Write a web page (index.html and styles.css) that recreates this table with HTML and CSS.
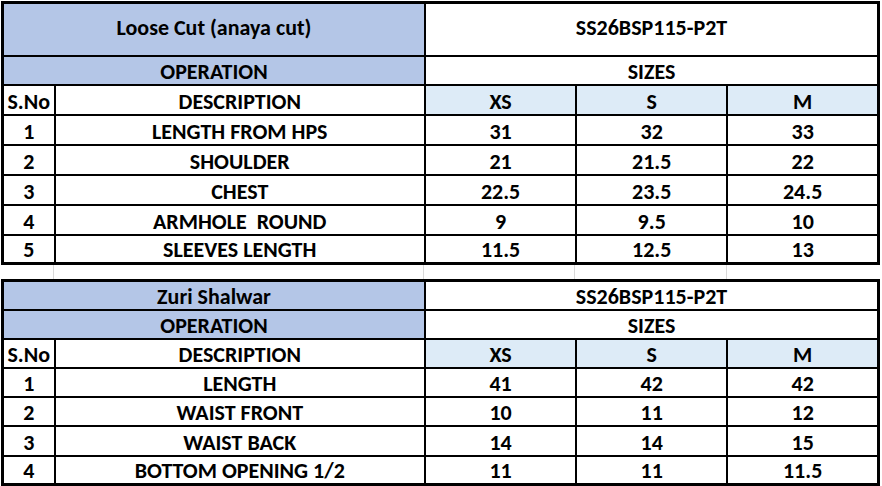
FILE: index.html
```html
<!DOCTYPE html>
<html>
<head>
<meta charset="utf-8">
<link rel="stylesheet" href="styles.css">
</head>
<body>
<div class="sheet">
  <table class="spec spec-top">
    <colgroup>
      <col class="c-sno"><col class="c-desc"><col class="c-size"><col class="c-size"><col class="c-size">
    </colgroup>
    <tr class="r-title-tall">
      <td colspan="2" class="blue mid">Loose Cut (anaya cut)</td>
      <td colspan="3" class="mid">SS26BSP115-P2T</td>
    </tr>
    <tr class="r-op">
      <td colspan="2" class="blue">OPERATION</td>
      <td colspan="3">SIZES</td>
    </tr>
    <tr class="r-head">
      <td>S.No</td><td>DESCRIPTION</td><td class="light">XS</td><td class="light">S</td><td class="light">M</td>
    </tr>
    <tr class="r-row"><td>1</td><td>LENGTH FROM HPS</td><td>31</td><td>32</td><td>33</td></tr>
    <tr class="r-row"><td>2</td><td>SHOULDER</td><td>21</td><td>21.5</td><td>22</td></tr>
    <tr class="r-row"><td>3</td><td>CHEST</td><td>22.5</td><td>23.5</td><td>24.5</td></tr>
    <tr class="r-row"><td>4</td><td>ARMHOLE&nbsp; ROUND</td><td>9</td><td>9.5</td><td>10</td></tr>
    <tr class="r-row2 r-last"><td>5</td><td>SLEEVES LENGTH</td><td>11.5</td><td>12.5</td><td>13</td></tr>
  </table>

  <div class="gap">
    <span class="gl"></span><span class="gl"></span><span class="gl"></span><span class="gl"></span><span></span>
  </div>

  <table class="spec spec-bottom">
    <colgroup>
      <col class="c-sno"><col class="c-desc"><col class="c-size"><col class="c-size"><col class="c-size">
    </colgroup>
    <tr class="r-title">
      <td colspan="2" class="blue">Zuri Shalwar</td>
      <td colspan="3">SS26BSP115-P2T</td>
    </tr>
    <tr class="r-op">
      <td colspan="2" class="blue">OPERATION</td>
      <td colspan="3">SIZES</td>
    </tr>
    <tr class="r-head2">
      <td>S.No</td><td>DESCRIPTION</td><td class="light">XS</td><td class="light">S</td><td class="light">M</td>
    </tr>
    <tr class="r-row2"><td>1</td><td>LENGTH</td><td>41</td><td>42</td><td>42</td></tr>
    <tr class="r-row2"><td>2</td><td>WAIST FRONT</td><td>10</td><td>11</td><td>12</td></tr>
    <tr class="r-row"><td>3</td><td>WAIST BACK</td><td>14</td><td>14</td><td>15</td></tr>
    <tr class="r-row2 r-last"><td>4</td><td>BOTTOM OPENING 1/2</td><td>11</td><td>11</td><td>11.5</td></tr>
  </table>
</div>
</body>
</html>
```

FILE: styles.css
```css
html, body {
  margin: 0;
  padding: 0;
  background: #ffffff;
}

.sheet {
  width: 882px;
  height: 486px;
  padding: 1px 0 0 1px;
  box-sizing: border-box;
  font-family: Calibri, Carlito, Lato, "Liberation Sans", sans-serif;
  font-weight: 700;
  font-size: 22px;
  color: #000000;
}

.spec {
  border-collapse: collapse;
  table-layout: fixed;
  width: 879px;
}

.c-sno { width: 52px; }
.c-desc { width: 370px; }
.c-size { width: 151px; }

.spec td {
  border: 2px solid #000000;
  text-align: center;
  vertical-align: bottom;
  padding: 0 0 2px 0;
  white-space: nowrap;
  line-height: 20px;
}

.spec tr:first-child td { border-top-width: 3px; }
.spec tr.r-last td { border-bottom-width: 3px; }
.spec td:first-child { border-left-width: 3px; }
.spec td:last-child { border-right-width: 3px; }

.spec td.mid { vertical-align: middle; padding: 0 0 2px 0; }

.blue { background: #b4c6e7; }
.light { background: #ddebf7; }

.r-title-tall { height: 53px; }
.r-title { height: 29px; }
.r-op { height: 29px; }
.r-head { height: 30px; }
.r-head2 { height: 29px; }
.r-row { height: 30px; }
.r-row2 { height: 29px; }

.gap {
  display: grid;
  grid-template-columns: 53px 370px 151px 152px 1fr;
  height: 14px;
}

.gap .gl {
  border-right: 1px solid #d9d9d9;
}
```
